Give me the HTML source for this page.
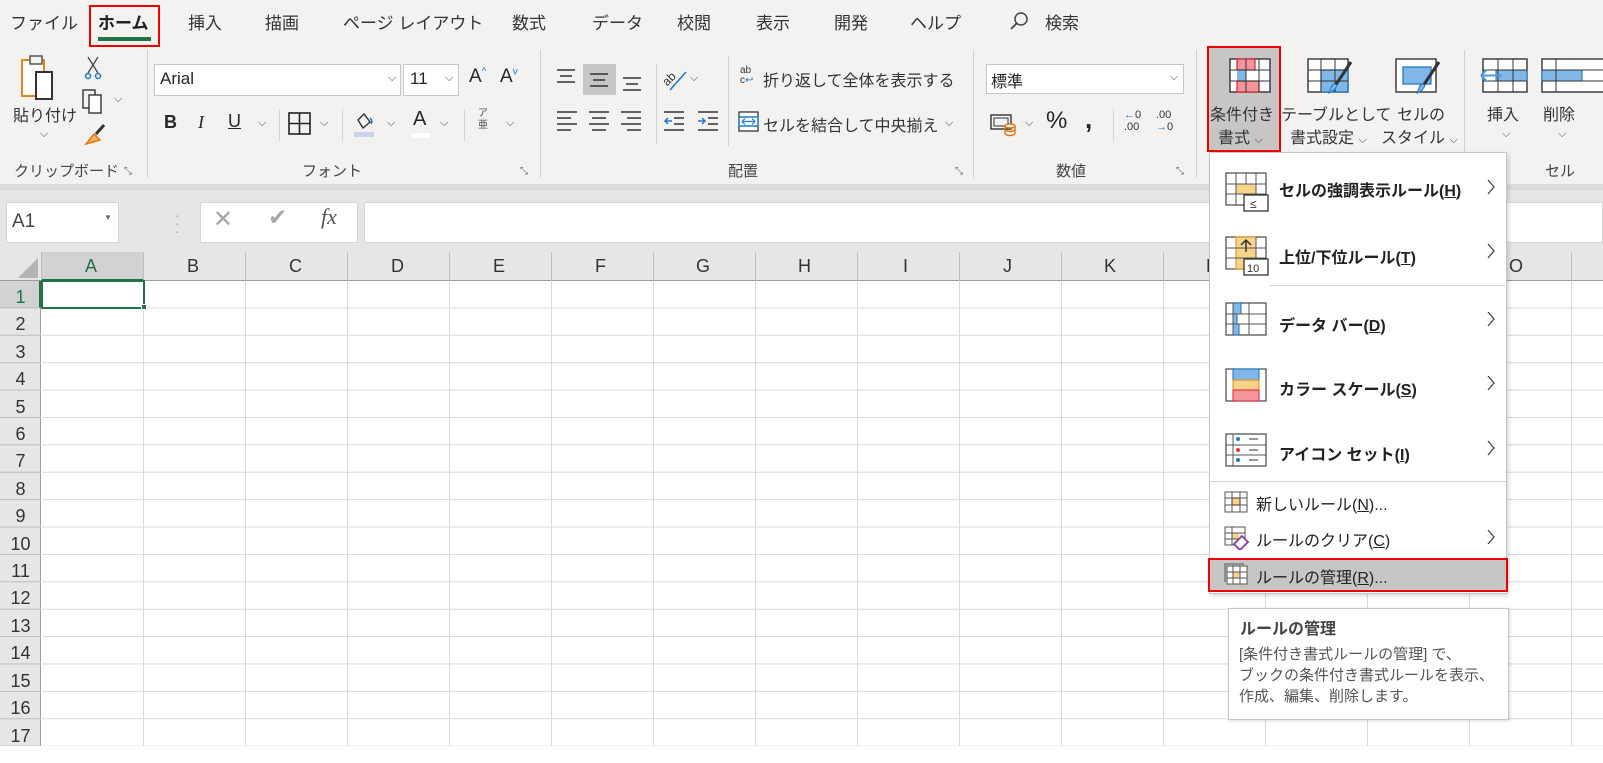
<!DOCTYPE html>
<html><head><meta charset="utf-8">
<style>
*{margin:0;padding:0;box-sizing:border-box}
body{width:1603px;height:763px;overflow:hidden;position:relative;background:#fff;font-family:"Liberation Sans","Noto Sans CJK JP",sans-serif;color:#262626}
.a{position:absolute;white-space:nowrap}
.tab{position:absolute;top:9px;font-size:17px;color:#333}
.gl{position:absolute;top:160px;font-size:15px;color:#444}
.sep{position:absolute;top:50px;width:1px;height:128px;background:#d4d2d0}
.t{font-size:16px;color:#333}
.chev{font-size:11px;color:#444}
.mi{position:absolute;left:1279px;font-size:16px;font-weight:bold;color:#222}
.arr{position:absolute;left:1486px;width:10px;height:16px}
.sm{position:absolute;left:1256px;font-size:16px;color:#222}
u{text-decoration:underline}
</style></head><body>
<div class="a" style="left:0;top:0;width:1603px;height:184px;background:#f3f2f1"></div>
<div class="a" style="left:0;top:184px;width:1603px;height:68px;background:#e6e6e6"></div>
<div class="a" style="left:0;top:184px;width:1603px;height:6px;background:#dcdcdc"></div>

<div class="tab" style="left:10px">ファイル</div>
<div class="tab" style="left:98px;font-weight:bold;color:#222">ホーム</div>
<div class="a" style="left:89px;top:5px;width:71px;height:42px;border:2px solid #e00"></div>
<div class="a" style="left:98px;top:37px;width:53px;height:4px;background:#217346"></div>
<div class="tab" style="left:188px">挿入</div>
<div class="tab" style="left:265px">描画</div>
<div class="tab" style="left:343px">ページ レイアウト</div>
<div class="tab" style="left:512px">数式</div>
<div class="tab" style="left:592px">データ</div>
<div class="tab" style="left:677px">校閲</div>
<div class="tab" style="left:756px">表示</div>
<div class="tab" style="left:834px">開発</div>
<div class="tab" style="left:910px">ヘルプ</div>
<svg class="a" style="left:1008px;top:10px" width="22" height="22"><circle cx="13" cy="9" r="6" fill="none" stroke="#444" stroke-width="1.5"/><line x1="9" y1="13" x2="3" y2="19" stroke="#444" stroke-width="1.8"/></svg>
<div class="tab" style="left:1045px">検索</div>

<svg class="a" style="left:20px;top:54px" width="50" height="48"><rect x="2" y="6" width="22" height="36" fill="#fff" stroke="#e08a1e" stroke-width="2"/><rect x="10" y="2" width="12" height="8" fill="#f3f2f1" stroke="#555" stroke-width="1.5"/><rect x="16" y="18" width="16" height="27" fill="#fff" stroke="#333" stroke-width="2"/></svg>
<div class="a t" style="left:13px;top:102px">貼り付け</div>
<div class="a chev" style="left:40px;top:128px">⌵</div>
<svg class="a" style="left:84px;top:55px" width="20" height="26"><path d="M4 2 L14 18 M14 2 L4 18" stroke="#444" stroke-width="1.3" fill="none"/><circle cx="4" cy="21" r="2.5" fill="none" stroke="#1e7bd0" stroke-width="1.5"/><circle cx="14" cy="21" r="2.5" fill="none" stroke="#1e7bd0" stroke-width="1.5"/></svg>
<svg class="a" style="left:82px;top:89px" width="22" height="26"><rect x="1" y="1" width="12" height="18" fill="none" stroke="#333" stroke-width="1.4"/><rect x="7" y="6" width="12" height="18" fill="#fff" stroke="#333" stroke-width="1.4"/></svg>
<div class="a chev" style="left:114px;top:93px">⌵</div>
<svg class="a" style="left:82px;top:122px" width="26" height="26"><path d="M4 22 L12 12 L18 18 Z" fill="#f4b860" stroke="#e07a10" stroke-width="1.5"/><path d="M14 12 L22 3" stroke="#333" stroke-width="3"/></svg>
<div class="gl" style="left:14px">クリップボード</div>
<div class="a" style="left:124px;top:166px;font-size:10px;color:#666">⤡</div>
<div class="sep" style="left:147px"></div>

<div class="a" style="left:154px;top:64px;width:247px;height:32px;background:#fff;border:1px solid #c8c6c4"></div>
<div class="a" style="left:160px;top:69px;font-size:17px">Arial</div>
<div class="a chev" style="left:388px;top:72px">⌵</div>
<div class="a" style="left:403px;top:64px;width:56px;height:32px;background:#fff;border:1px solid #c8c6c4"></div>
<div class="a" style="left:410px;top:69px;font-size:17px">11</div>
<div class="a chev" style="left:445px;top:72px">⌵</div>
<div class="a" style="left:469px;top:66px;font-size:19px">A<sup style="font-size:10px;color:#1e7bd0">^</sup></div>
<div class="a" style="left:500px;top:66px;font-size:19px">A<sup style="font-size:10px;color:#1e7bd0">v</sup></div>
<div class="a" style="left:164px;top:112px;font-size:18px;font-weight:bold">B</div>
<div class="a" style="left:198px;top:112px;font-size:18px;font-style:italic;font-family:'Liberation Serif',serif">I</div>
<div class="a" style="left:228px;top:111px;font-size:18px;text-decoration:underline">U</div>
<div class="a chev" style="left:258px;top:117px">⌵</div>
<div class="a" style="left:279px;top:109px;width:1px;height:32px;background:#d4d2d0"></div>
<svg class="a" style="left:288px;top:112px" width="24" height="24"><rect x="1" y="1" width="21" height="21" fill="none" stroke="#222" stroke-width="1.6"/><path d="M11.5 1V22M1 11.5H22" stroke="#222" stroke-width="1.6"/></svg>
<div class="a chev" style="left:320px;top:117px">⌵</div>
<div class="a" style="left:342px;top:109px;width:1px;height:32px;background:#d4d2d0"></div>
<svg class="a" style="left:354px;top:110px" width="24" height="28"><path d="M4 10 L10 4 L16 12 L9 18 Z" fill="none" stroke="#333" stroke-width="1.4"/><path d="M16 8 q3 3 1 6" stroke="#1e7bd0" stroke-width="1.6" fill="none"/><rect x="0" y="22" width="20" height="5" fill="#c9d3ee"/></svg>
<div class="a chev" style="left:387px;top:117px">⌵</div>
<div class="a" style="left:413px;top:108px;font-size:20px">A</div>
<div class="a" style="left:412px;top:133px;width:18px;height:5px;background:#fff"></div>
<div class="a chev" style="left:440px;top:117px">⌵</div>
<div class="a" style="left:464px;top:109px;width:1px;height:32px;background:#d4d2d0"></div>
<div class="a" style="left:478px;top:108px;font-size:10px;color:#555;line-height:12px">ア<br>亜</div>
<div class="a chev" style="left:506px;top:117px">⌵</div>
<div class="gl" style="left:302px">フォント</div>
<div class="a" style="left:520px;top:166px;font-size:10px;color:#666">⤡</div>
<div class="sep" style="left:540px"></div>

<div class="a" style="left:583px;top:64px;width:33px;height:31px;background:#c8c6c4"></div>
<svg class="a" style="left:555px;top:64px" width="100" height="32"><g stroke="#333" stroke-width="1.5"><path d="M2 6H20M5 12H17M2 18H20"/><path d="M35 10H53M38 16H50M35 22H53"/><path d="M68 14H86M71 20H83M68 26H86"/></g></svg>
<svg class="a" style="left:555px;top:108px" width="100" height="28"><g stroke="#333" stroke-width="1.5"><path d="M2 4H22M2 10H16M2 16H22M2 22H16"/><path d="M34 4H54M37 10H51M34 16H54M37 22H51"/><path d="M66 4H86M72 10H86M66 16H86M72 22H86"/></g></svg>
<div class="a" style="left:656px;top:64px;width:1px;height:80px;background:#d4d2d0"></div>
<svg class="a" style="left:662px;top:64px" width="30" height="28"><text x="0" y="18" font-size="12" transform="rotate(-45 8 14)" fill="#333">ab</text><path d="M8 26 L24 8" stroke="#1e7bd0" stroke-width="1.6"/></svg>
<div class="a chev" style="left:690px;top:72px">⌵</div>
<svg class="a" style="left:662px;top:108px" width="60" height="28"><g stroke="#333" stroke-width="1.5"><path d="M2 4H22M12 10H22M12 16H22M2 22H22"/><path d="M36 4H56M46 10H56M46 16H56M36 22H56"/></g><path d="M10 13H3M6 10L3 13L6 16" stroke="#1e7bd0" stroke-width="1.5" fill="none"/><path d="M36 13H43M40 10L43 13L40 16" stroke="#1e7bd0" stroke-width="1.5" fill="none"/></svg>
<div class="a" style="left:728px;top:56px;width:1px;height:90px;background:#d4d2d0"></div>
<div class="a" style="left:740px;top:66px;font-size:10px;line-height:10px;color:#333">ab<br>c<span style="color:#1e7bd0">↩</span></div>
<div class="a t" style="left:763px;top:67px">折り返して全体を表示する</div>
<svg class="a" style="left:738px;top:111px" width="22" height="22"><rect x="1" y="1" width="19" height="19" fill="#fff" stroke="#333" stroke-width="1.3"/><rect x="1" y="6" width="19" height="9" fill="#fff" stroke="#1e7bd0" stroke-width="1.5"/><path d="M4 10.5H17M4 10.5l3-3M4 10.5l3 3M17 10.5l-3-3M17 10.5l-3 3" stroke="#1e7bd0" stroke-width="1.2" fill="none"/></svg>
<div class="a t" style="left:763px;top:112px">セルを結合して中央揃え</div>
<div class="a chev" style="left:945px;top:117px">⌵</div>
<div class="gl" style="left:728px">配置</div>
<div class="a" style="left:955px;top:166px;font-size:10px;color:#666">⤡</div>
<div class="sep" style="left:973px"></div>

<div class="a" style="left:986px;top:64px;width:198px;height:30px;background:#fff;border:1px solid #c8c6c4"></div>
<div class="a" style="left:991px;top:68px;font-size:16px">標準</div>
<div class="a chev" style="left:1170px;top:71px">⌵</div>
<svg class="a" style="left:990px;top:112px" width="30" height="26"><rect x="1" y="3" width="20" height="14" fill="none" stroke="#333" stroke-width="1.4"/><rect x="4" y="6" width="14" height="8" fill="none" stroke="#333"/><ellipse cx="20" cy="14" rx="5" ry="2" fill="#f3f2f1" stroke="#e07a10" stroke-width="1.4"/><path d="M15 14V22M25 14V22M15 18q5 3 10 0M15 22q5 3 10 0" stroke="#e07a10" stroke-width="1.4" fill="none"/></svg>
<div class="a chev" style="left:1025px;top:117px">⌵</div>
<div class="a" style="left:1046px;top:107px;font-size:24px">%</div>
<div class="a" style="left:1085px;top:104px;font-size:26px;font-weight:bold">,</div>
<div class="a" style="left:1113px;top:109px;width:1px;height:32px;background:#d4d2d0"></div>
<div class="a" style="left:1124px;top:109px;font-size:11px;line-height:12px;color:#333"><span style="color:#1e7bd0">←</span>0<br>.00</div>
<div class="a" style="left:1156px;top:109px;font-size:11px;line-height:12px;color:#333">.00<br><span style="color:#1e7bd0">→</span>0</div>
<div class="gl" style="left:1056px">数値</div>
<div class="a" style="left:1176px;top:166px;font-size:10px;color:#666">⤡</div>
<div class="sep" style="left:1196px"></div>

<div class="a" style="left:1207px;top:46px;width:74px;height:106px;background:#c8c6c4;border:2px solid #e00"></div>
<svg class="a" style="left:1229px;top:58px" width="44" height="36"><rect x="1" y="1" width="40" height="33" fill="#fff" stroke="#333" stroke-width="1.4"/><rect x="8" y="1" width="18" height="11" fill="#f4959c" stroke="#d23" stroke-width="1.2"/><rect x="8" y="12" width="9" height="11" fill="#7fb7e8"/><rect x="8" y="23" width="22" height="11" fill="#f4959c" stroke="#d23" stroke-width="1.2"/><path d="M1 12H41M1 23H41M17 1V34M30 1V34" stroke="#333" stroke-width="1"/></svg>
<div class="a t" style="left:1210px;top:101px">条件付き</div>
<div class="a t" style="left:1218px;top:124px">書式 <span class="chev">⌵</span></div>
<svg class="a" style="left:1307px;top:58px" width="48" height="40"><rect x="1" y="1" width="40" height="33" fill="#fff" stroke="#333" stroke-width="1.4"/><rect x="14" y="12" width="27" height="22" fill="#7fb7e8" stroke="#1e6fc0" stroke-width="1.2"/><path d="M1 12H41M1 23H41M14 1V34M28 1V34" stroke="#333" stroke-width="1"/><path d="M44 4 L28 28" stroke="#333" stroke-width="3"/><path d="M24 30 q2-6 6-3 q-2 6-8 8z" fill="#7fb7e8" stroke="#1e6fc0"/></svg>
<div class="a t" style="left:1281px;top:101px">テーブルとして</div>
<div class="a t" style="left:1290px;top:124px">書式設定 <span class="chev">⌵</span></div>
<svg class="a" style="left:1395px;top:58px" width="48" height="40"><rect x="1" y="1" width="40" height="33" fill="#fff" stroke="#333" stroke-width="1.4"/><rect x="8" y="9" width="28" height="17" fill="#7fb7e8" stroke="#1e6fc0" stroke-width="1.2"/><path d="M44 4 L28 28" stroke="#333" stroke-width="3"/><path d="M24 30 q2-6 6-3 q-2 6-8 8z" fill="#7fb7e8" stroke="#1e6fc0"/></svg>
<div class="a t" style="left:1397px;top:101px">セルの</div>
<div class="a t" style="left:1381px;top:124px">スタイル <span class="chev">⌵</span></div>
<svg class="a" style="left:1480px;top:58px" width="123" height="36"><rect x="3" y="1" width="44" height="33" fill="#fff" stroke="#333" stroke-width="1.4"/><rect x="16" y="12" width="31" height="11" fill="#7fb7e8" stroke="#1e6fc0"/><path d="M3 12H47M3 23H47M18 1V34M33 1V34" stroke="#333" stroke-width="1"/><path d="M1 17.5H22M1 17.5l6-6M1 17.5l6 6" stroke="#4a9be0" stroke-width="2" fill="none"/><rect x="62" y="1" width="70" height="33" fill="#fff" stroke="#333" stroke-width="1.4"/><rect x="62" y="12" width="40" height="11" fill="#7fb7e8" stroke="#1e6fc0"/><path d="M62 12H130M62 23H130M76 1V34" stroke="#333"/></svg>
<div class="a t" style="left:1487px;top:101px">挿入</div>
<div class="a chev" style="left:1502px;top:128px">⌵</div>
<div class="a t" style="left:1543px;top:101px">削除</div>
<div class="a chev" style="left:1558px;top:128px">⌵</div>
<div class="gl" style="left:1545px">セル</div>
<div class="sep" style="left:1464px"></div>

<!-- formula bar -->
<div class="a" style="left:6px;top:202px;width:113px;height:41px;background:#fff;border:1px solid #d4d4d4"></div>
<div class="a" style="left:12px;top:211px;font-size:19px;color:#444">A1</div>
<div class="a" style="left:104px;top:213px;font-size:8px;color:#666">▼</div>
<div class="a" style="left:175px;top:211px;font-size:14px;color:#aaa;line-height:8px">·<br>·<br>·</div>
<div class="a" style="left:200px;top:202px;width:158px;height:41px;background:#fff;border:1px solid #d4d4d4"></div>
<div class="a" style="left:213px;top:205px;font-size:24px;color:#a8a8a8">✕</div>
<div class="a" style="left:268px;top:204px;font-size:23px;color:#a8a8a8">✔</div>
<div class="a" style="left:321px;top:204px;font-size:22px;font-style:italic;font-family:'Liberation Serif',serif;color:#555">fx</div>
<div class="a" style="left:364px;top:202px;width:1239px;height:41px;background:#fff;border:1px solid #d4d4d4"></div>

<!-- grid -->
<div class="a" style="left:0;top:252px;width:1603px;height:29px;background:#e6e6e6;border-bottom:1px solid #9e9e9e"></div>
<div class="a" style="left:0;top:281px;width:41px;height:482px;background:#e6e6e6;border-right:1px solid #9e9e9e"></div>
<svg class="a" style="left:16px;top:258px" width="22" height="20"><path d="M22 0V20H2Z" fill="#b4b4b4"/></svg>
<div class="a" style="left:41px;top:252px;width:102px;height:29px;background:#d2d2d2;border-bottom:2px solid #217346"></div>
<div class="a" style="left:0;top:281px;width:41px;height:27px;background:#d2d2d2;border-right:2px solid #217346"></div>
<div class="a" style="left:42px;top:281px;width:1561px;height:465px;background-color:#fff;background-image:linear-gradient(to right,#d9d9d9 1px,transparent 1px),linear-gradient(to bottom,#d9d9d9 1px,transparent 1px);background-size:102px 27.4px;background-position:101px 0,0 26.4px"></div>
<div class="a" style="left:41px;top:252px;width:1562px;height:29px;background-image:linear-gradient(to right,#bdbdbd 1px,transparent 1px);background-size:102px 29px;background-position:102px 0"></div>
<div class="a" style="left:0;top:281px;width:41px;height:466px;background-image:linear-gradient(to bottom,#bdbdbd 1px,transparent 1px);background-size:41px 27.4px;background-position:0 26.4px"></div>
<div class="a" style="left:0;top:746px;width:1603px;height:17px;background:#fff"></div>
<div class="a" style="left:41px;top:280px;width:104px;height:29px;border:2px solid #217346"></div>
<div class="a" style="left:141px;top:304px;width:6px;height:6px;background:#217346;border:1px solid #fff"></div>

<div class="a" style="top:256px;left:0;width:1603px;font-size:18px;color:#333">
<span class="a" style="left:85px;color:#217346">A</span><span class="a" style="left:187px">B</span><span class="a" style="left:289px">C</span><span class="a" style="left:391px">D</span><span class="a" style="left:493px">E</span><span class="a" style="left:595px">F</span><span class="a" style="left:696px">G</span><span class="a" style="left:798px">H</span><span class="a" style="left:903px">I</span><span class="a" style="left:1003px">J</span><span class="a" style="left:1104px">K</span><span class="a" style="left:1206px">L</span><span class="a" style="left:1306px">M</span><span class="a" style="left:1408px">N</span><span class="a" style="left:1509px">O</span></div>
<div class="a" style="left:0;top:284px;width:41px;font-size:18px;color:#333;text-align:center;line-height:27.4px">
<div style="color:#217346">1</div><div>2</div><div>3</div><div>4</div><div>5</div><div>6</div><div>7</div><div>8</div><div>9</div><div>10</div><div>11</div><div>12</div><div>13</div><div>14</div><div>15</div><div>16</div><div>17</div></div>

<!-- dropdown menu -->
<div class="a" style="left:1209px;top:152px;width:298px;height:442px;background:#fff;border:1px solid #c8c6c4;box-shadow:2px 2px 4px rgba(0,0,0,.15)"></div>
<svg class="a" style="left:1225px;top:172px" width="44" height="40"><rect x="1" y="1" width="40" height="32" fill="#fff" stroke="#555" stroke-width="1.3"/><rect x="11" y="12" width="20" height="10" fill="#f8d38a" stroke="#e08a1e"/><path d="M1 12H41M1 22H41M11 1V33M31 1V33M21 1V12" stroke="#555"/><rect x="19" y="23" width="24" height="16" fill="#fff" stroke="#333" stroke-width="1.3"/><text x="25" y="36" font-size="12" fill="#333" font-family="Liberation Sans">≤</text></svg>
<div class="mi" style="top:177px">セルの強調表示ルール(<u>H</u>)</div>
<svg class="arr" style="top:179px"><path d="M2 1L8 8L2 15" fill="none" stroke="#444" stroke-width="1.3"/></svg>
<svg class="a" style="left:1225px;top:236px" width="44" height="40"><rect x="1" y="1" width="40" height="32" fill="#fff" stroke="#555" stroke-width="1.3"/><rect x="11" y="1" width="20" height="32" fill="#f8d38a" stroke="#e08a1e"/><path d="M1 12H41M1 22H41M31 1V33" stroke="#555"/><path d="M21 4V16M16 9l5-5 5 5" stroke="#333" stroke-width="1.5" fill="none"/><rect x="19" y="23" width="24" height="16" fill="#fff" stroke="#333" stroke-width="1.3"/><text x="22" y="36" font-size="11" fill="#333" font-family="Liberation Sans">10</text></svg>
<div class="mi" style="top:244px">上位/下位ルール(<u>T</u>)</div>
<svg class="arr" style="top:243px"><path d="M2 1L8 8L2 15" fill="none" stroke="#444" stroke-width="1.3"/></svg>
<div class="a" style="left:1270px;top:285px;width:235px;height:1px;background:#d4d4d4"></div>
<svg class="a" style="left:1225px;top:302px" width="44" height="36"><rect x="1" y="1" width="40" height="32" fill="#fff" stroke="#555" stroke-width="1.3"/><rect x="8" y="1" width="8" height="11" fill="#7fb7e8" stroke="#1e6fc0"/><rect x="8" y="12" width="4" height="10" fill="#7fb7e8" stroke="#1e6fc0"/><rect x="8" y="22" width="6" height="11" fill="#7fb7e8" stroke="#1e6fc0"/><path d="M1 12H41M1 22H41M8 1V33M24 1V33" stroke="#555"/></svg>
<div class="mi" style="top:312px">データ バー(<u>D</u>)</div>
<svg class="arr" style="top:311px"><path d="M2 1L8 8L2 15" fill="none" stroke="#444" stroke-width="1.3"/></svg>
<svg class="a" style="left:1225px;top:368px" width="44" height="36"><rect x="1" y="1" width="40" height="32" fill="#fff" stroke="#555" stroke-width="1.3"/><rect x="8" y="1" width="26" height="11" fill="#7fb7e8" stroke="#1e6fc0"/><rect x="8" y="12" width="26" height="10" fill="#f8d38a" stroke="#e08a1e"/><rect x="8" y="22" width="26" height="11" fill="#f4959c" stroke="#d23"/></svg>
<div class="mi" style="top:376px">カラー スケール(<u>S</u>)</div>
<svg class="arr" style="top:375px"><path d="M2 1L8 8L2 15" fill="none" stroke="#444" stroke-width="1.3"/></svg>
<svg class="a" style="left:1225px;top:433px" width="44" height="36"><rect x="1" y="1" width="40" height="32" fill="#fff" stroke="#555" stroke-width="1.3"/><path d="M1 12H41M1 22H41M8 1V33" stroke="#555"/><circle cx="13" cy="6" r="2" fill="#1e7bd0"/><circle cx="13" cy="17" r="2" fill="#e33"/><circle cx="13" cy="27" r="2" fill="#1e7bd0"/><path d="M24 6H33M24 17H33M24 27H33" stroke="#777" stroke-width="1.5"/></svg>
<div class="mi" style="top:441px">アイコン セット(<u>I</u>)</div>
<svg class="arr" style="top:440px"><path d="M2 1L8 8L2 15" fill="none" stroke="#444" stroke-width="1.3"/></svg>
<div class="a" style="left:1210px;top:481px;width:296px;height:1px;background:#d4d4d4"></div>
<svg class="a" style="left:1224px;top:491px" width="24" height="22"><rect x="1" y="1" width="22" height="20" fill="#fff" stroke="#555"/><rect x="8" y="7" width="8" height="7" fill="#f8d38a" stroke="#e07a10" stroke-width="1.3"/><path d="M1 7H23M1 14H23M8 1V21M16 1V21" stroke="#555"/></svg>
<div class="sm" style="top:491px">新しいルール(<u>N</u>)...</div>
<svg class="a" style="left:1224px;top:526px" width="26" height="24"><rect x="1" y="1" width="20" height="18" fill="#fff" stroke="#555"/><rect x="8" y="7" width="7" height="6" fill="#f8d38a"/><path d="M1 7H21M1 13H21M8 1V19" stroke="#555"/><path d="M10 18 l8-8 6 6 -8 8z" fill="#fff" stroke="#8a3aa8" stroke-width="1.8"/></svg>
<div class="sm" style="top:527px">ルールのクリア(<u>C</u>)</div>
<svg class="arr" style="top:529px"><path d="M2 1L8 8L2 15" fill="none" stroke="#444" stroke-width="1.3"/></svg>
<div class="a" style="left:1208px;top:558px;width:300px;height:34px;background:#c8c6c4;border:2px solid #e00"></div>
<svg class="a" style="left:1224px;top:563px" width="24" height="22"><rect x="3" y="3" width="20" height="18" fill="#fff" stroke="#555"/><path d="M1 19V1H20" stroke="#555" fill="none"/><rect x="9" y="9" width="7" height="6" fill="#f8d38a" stroke="#e07a10"/><path d="M3 9H23M3 15H23M9 3V21M16 3V21" stroke="#555"/></svg>
<div class="sm" style="top:564px">ルールの管理(<u>R</u>)...</div>

<div class="a" style="left:1228px;top:608px;width:281px;height:112px;background:#fff;border:1px solid #c8c6c4;box-shadow:1px 1px 3px rgba(0,0,0,.15)"></div>
<div class="a" style="left:1240px;top:615px;font-size:16px;font-weight:bold;color:#444">ルールの管理</div>
<div class="a" style="left:1239px;top:644px;font-size:15px;color:#555;line-height:21px">[条件付き書式ルールの管理] で、<br>ブックの条件付き書式ルールを表示、<br>作成、編集、削除します。</div>
</body></html>
